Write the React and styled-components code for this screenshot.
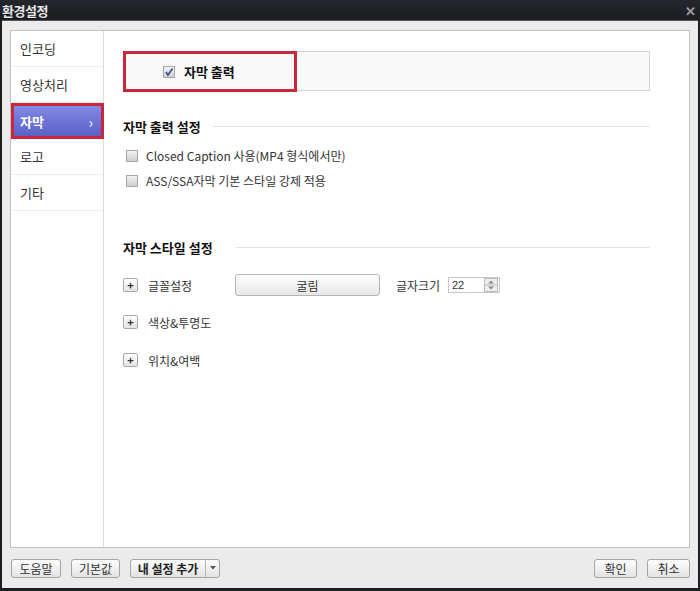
import React from 'react';
import styled, { createGlobalStyle } from 'styled-components';

const GlobalStyle = createGlobalStyle`
  html, body {
    margin: 0;
    padding: 0;
    background: #1d1e22;
  }
  body {
    font-family: "Noto Sans CJK KR", "Liberation Sans", sans-serif;
    font-size: 12px;
    color: #333;
  }
`;

const NAV = ['인코딩', '영상처리', '자막', '로고', '기타'];

const Check = ({ checked }) => (
  <CheckBox>
    {checked && (
      <svg width="10" height="10" viewBox="0 0 10 10">
        <path d="M2 5 L4 8 L8.5 1.5" fill="none" stroke="#3a4a8a" strokeWidth="1.6" />
      </svg>
    )}
  </CheckBox>
);

const App = () => {
  return (
    <>
      <GlobalStyle />
      <Window>
        <TitleBar>
          <Title>환경설정</Title>
          <Close>✕</Close>
        </TitleBar>
        <Body>
          <Panel>
            <Nav>
              {NAV.map((n) => (
                <NavItem key={n} $active={n === '자막'}>
                  {n}
                  {n === '자막' && <Chevron>›</Chevron>}
                </NavItem>
              ))}
            </Nav>
            <Content>
              <EnableBox>
                <Highlight>
                  <Check checked />
                  <EnableLabel>자막 출력</EnableLabel>
                </Highlight>
              </EnableBox>

              <SectionHead $top={27}>
                <span>자막 출력 설정</span>
                <Rule $gap={12} />
              </SectionHead>
              <CheckRow $top={12}>
                <Check />
                <span>Closed Caption 사용(MP4 형식에서만)</span>
              </CheckRow>
              <CheckRow $top={6}>
                <Check />
                <span>ASS/SSA자막 기본 스타일 강제 적용</span>
              </CheckRow>

              <SectionHead $top={49}>
                <span>자막 스타일 설정</span>
                <Rule $gap={23} />
              </SectionHead>
              <StyleRow $top={19}>
                <PlusBtn>+</PlusBtn>
                <RowLabel $width={87}>글꼴설정</RowLabel>
                <FontBtn>굴림</FontBtn>
                <RowLabel $width={52} $pad={16}>글자크기</RowLabel>
                <Spin>
                  <span>22</span>
                  <SpinArrows>
                    <svg width="14" height="14" viewBox="0 0 14 14">
                      <rect x="0.5" y="0.5" width="13" height="13" fill="#eee" stroke="#bbb" />
                      <line x1="1" y1="7" x2="13" y2="7" stroke="#bbb" />
                      <path d="M4 5.5 L7 2.5 L10 5.5 Z" fill="#8a8a8a" />
                      <path d="M4 8.5 L7 11.5 L10 8.5 Z" fill="#8a8a8a" />
                    </svg>
                  </SpinArrows>
                </Spin>
              </StyleRow>
              <StyleRow $top={15}>
                <PlusBtn>+</PlusBtn>
                <RowLabel>색상&amp;투명도</RowLabel>
              </StyleRow>
              <StyleRow $top={16}>
                <PlusBtn>+</PlusBtn>
                <RowLabel>위치&amp;여백</RowLabel>
              </StyleRow>
            </Content>
          </Panel>
          <Footer>
            <BtnGroup>
              <Button $w={50}>도움말</Button>
              <Button $w={49}>기본값</Button>
              <Split>
                <SplitMain>내 설정 추가</SplitMain>
                <SplitArrow>
                  <svg width="6" height="4" viewBox="0 0 6 4">
                    <path d="M0 0 L6 0 L3 3.5 Z" fill="#555" />
                  </svg>
                </SplitArrow>
              </Split>
            </BtnGroup>
            <BtnGroup>
              <Button $w={43}>확인</Button>
              <Button $w={43}>취소</Button>
            </BtnGroup>
          </Footer>
        </Body>
      </Window>
    </>
  );
};

export default App;

const Window = styled.div`
  width: 700px;
  height: 591px;
  display: flex;
  flex-direction: column;
  background: #1d1e22;
  box-sizing: border-box;
  padding: 0 2px 3px 2px;
`;

const TitleBar = styled.div`
  height: 21px;
  display: flex;
  align-items: center;
  justify-content: space-between;
  margin: 0 -2px;
  padding: 0 2px;
  background: linear-gradient(#26272c, #1b1c20);
`;

const Title = styled.div`
  color: #e6e6e6;
  font-weight: bold;
  font-size: 13px;
  letter-spacing: -0.5px;
`;

const Close = styled.div`
  color: #9a9a9a;
  font-size: 13px;
  font-weight: bold;
  margin-right: 2px;
`;

const Body = styled.div`
  flex: 1;
  display: flex;
  flex-direction: column;
  background: #ebebeb;
  padding: 9px 8px 0 8px;
  border-top: 1px solid #55575c;
`;

const Panel = styled.div`
  height: 518px;
  display: flex;
  background: #fff;
  border: 1px solid #c2c2c2;
  box-sizing: border-box;
`;

const Nav = styled.div`
  width: 92px;
  border-right: 1px solid #dcdcdc;
  display: flex;
  flex-direction: column;
`;

const NavItem = styled.div`
  height: 36px;
  box-sizing: border-box;
  display: flex;
  align-items: center;
  justify-content: space-between;
  padding: 0 10px 0 9px;
  font-size: 13px;
  border-bottom: 1px solid #ececec;
  color: #333;
  ${({ $active }) =>
    $active &&
    `
    margin: 0 -1px 0 0;
    color: #fff;
    font-weight: bold;
    background: linear-gradient(#8289e6, #5b60c6);
    border: 3px solid #c9283c;
    padding: 0 8px 0 6px;
  `}
`;

const Chevron = styled.span`
  font-size: 15px;
  font-weight: normal;
`;

const Content = styled.div`
  flex: 1;
  padding: 20px 39px 0 19px;
  display: flex;
  flex-direction: column;
`;

const EnableBox = styled.div`
  height: 40px;
  background: #f9f9f9;
  border: 1px solid #d4d4d4;
  box-sizing: border-box;
  display: flex;
`;

const Highlight = styled.div`
  width: 174px;
  margin: -1px 0 -2px -1px;
  border: 3px solid #c9283c;
  box-sizing: border-box;
  display: flex;
  align-items: center;
  gap: 9px;
  padding-left: 37px;
`;

const EnableLabel = styled.span`
  font-weight: bold;
  font-size: 13px;
  color: #111;
`;

const CheckBox = styled.span`
  width: 12px;
  height: 12px;
  box-sizing: border-box;
  border: 1px solid #a7a7a7;
  background: linear-gradient(#f2f2f2, #cfcfcf);
  display: inline-flex;
  align-items: center;
  justify-content: center;
`;

const SectionHead = styled.div`
  margin-top: ${({ $top }) => $top}px;
  display: flex;
  align-items: center;
  font-weight: bold;
  font-size: 13px;
  color: #111;
  height: 16px;
`;

const Rule = styled.div`
  flex: 1;
  height: 1px;
  background: #e2e2e2;
  margin-left: ${({ $gap }) => $gap}px;
`;

const CheckRow = styled.div`
  margin-top: ${({ $top }) => $top}px;
  padding-left: 3px;
  height: 19px;
  display: flex;
  align-items: center;
  gap: 8px;
  color: #333;
`;

const StyleRow = styled.div`
  margin-top: ${({ $top }) => $top}px;
  height: 22px;
  display: flex;
  align-items: center;
`;

const PlusBtn = styled.span`
  width: 15px;
  height: 14px;
  box-sizing: border-box;
  border: 1px solid #a9a9a9;
  border-radius: 2px;
  background: linear-gradient(#fff, #e4e4e4);
  display: inline-flex;
  align-items: center;
  justify-content: center;
  font-weight: bold;
  font-size: 11px;
  line-height: 1;
  color: #333;
  margin-right: 10px;
`;

const RowLabel = styled.span`
  width: ${({ $width }) => ($width ? `${$width}px` : 'auto')};
  padding-left: ${({ $pad }) => $pad || 0}px;
  color: #333;
`;

const FontBtn = styled.div`
  width: 145px;
  height: 22px;
  box-sizing: border-box;
  border: 1px solid #b4b4b4;
  border-radius: 3px;
  background: linear-gradient(#fdfdfd, #e7e7e7);
  display: flex;
  align-items: center;
  justify-content: center;
  color: #333;
`;

const Spin = styled.div`
  width: 52px;
  height: 16px;
  box-sizing: border-box;
  border: 1px solid #c8c8c8;
  display: flex;
  align-items: center;
  justify-content: space-between;
  padding: 0 1px 0 3px;
  font-family: "Liberation Sans", sans-serif;
  font-size: 11px;
  color: #333;
`;

const SpinArrows = styled.span`
  display: flex;
`;

const Footer = styled.div`
  height: 40px;
  display: flex;
  align-items: center;
  justify-content: space-between;
  padding: 0 0 0 1px;
`;

const BtnGroup = styled.div`
  display: flex;
  gap: 10px;
`;

const Button = styled.div`
  width: ${({ $w }) => $w}px;
  height: 19px;
  box-sizing: border-box;
  border: 1px solid #a5a5a5;
  border-radius: 3px;
  background: linear-gradient(#fdfdfd, #e3e3e3);
  display: flex;
  align-items: center;
  justify-content: center;
  color: #333;
`;

const Split = styled.div`
  width: 90px;
  height: 19px;
  box-sizing: border-box;
  border: 1px solid #a5a5a5;
  border-radius: 3px;
  background: linear-gradient(#fdfdfd, #e3e3e3);
  display: flex;
`;

const SplitMain = styled.div`
  flex: 1;
  display: flex;
  align-items: center;
  justify-content: center;
  font-weight: bold;
  color: #222;
`;

const SplitArrow = styled.div`
  width: 13px;
  border-left: 1px solid #b5b5b5;
  display: flex;
  align-items: center;
  justify-content: center;
`;
